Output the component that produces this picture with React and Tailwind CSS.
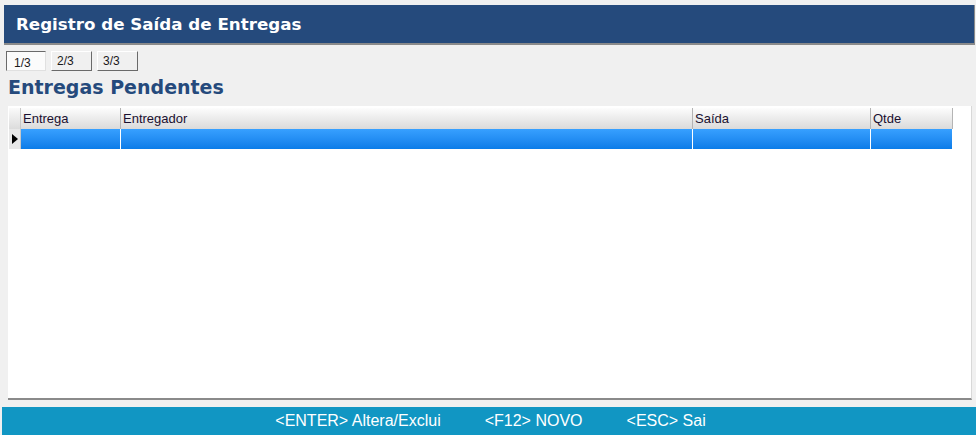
import { useState } from "react";

const COLUMNS = [
  { key: "entrega", label: "Entrega", width: "w-[100px]" },
  { key: "entregador", label: "Entregador", width: "w-[572px]" },
  { key: "saida", label: "Saída", width: "w-[178px]" },
  { key: "qtde", label: "Qtde", width: "w-[82px]" },
];

const TABS = ["1/3", "2/3", "3/3"];

export default function App() {
  const [tab, setTab] = useState(0);

  return (
    <div className="w-[976px] h-[435px] bg-[#f0f0f0] flex flex-col font-['Liberation_Sans',sans-serif] overflow-hidden">
      <div className="mt-[5px] ml-[4px] mr-px h-[40px] bg-[#254a7c] border-b-2 border-r border-[#8a8a8a] flex items-center pl-[12px] shrink-0">
        <h1 className="text-white font-bold text-[16.7px] font-['DejaVu_Sans',sans-serif] pt-[1px]">
          Registro de Saída de Entregas
        </h1>
      </div>

      <div className="flex gap-[5px] ml-[6px] mt-[6px]">
        {TABS.map((t, i) => (
          <button
            key={t}
            type="button"
            onClick={() => setTab(i)}
            className={
              i === tab
                ? "w-[40px] h-[20px] text-left pl-[7px] pt-[2px] text-[12px] text-[#1a1a1a] bg-[#fbfbfb] border border-t-[#6a6a6a] border-l-[#6a6a6a] border-r-[#e0e0e0] border-b-[#e0e0e0]"
                : "w-[41px] h-[20px] text-left pl-[5px] text-[12px] text-[#1a1a1a] bg-[#f0f0f0] border border-t-white border-l-white border-r-[#6a6a6a] border-b-[#6a6a6a]"
            }
          >
            {t}
          </button>
        ))}
      </div>

      <h2 className="ml-[8px] mt-[5px] text-[19px] leading-[22px] font-bold text-[#254a7c] font-['DejaVu_Sans',sans-serif]">
        Entregas Pendentes
      </h2>

      <div className="ml-[8px] mr-[4px] mt-[8px] h-[295px] bg-white border-r border-b-2 border-r-[#d8d8d8] border-b-[#8a8a8a] pt-[2px] pl-px">
        <div className="flex h-[21px]">
          <div className="w-[12px] bg-gradient-to-b from-[#fafafa] to-[#dcdcdc] border-r border-[#c8c8c8]" />
          {COLUMNS.map((c) => (
            <div
              key={c.key}
              className={`${c.width} bg-gradient-to-b from-[#fdfdfd] to-[#dadada] border-r border-[#b4b4b4] text-[13px] leading-[21px] pl-[2px] text-[#1a1030]`}
            >
              {c.label}
            </div>
          ))}
        </div>
        <div className="flex h-[20px]">
          <div className="w-[12px] bg-[#e8e8e8] border-r border-[#c8c8c8] flex items-center justify-center">
            <svg width="6" height="10" viewBox="0 0 6 10">
              <path d="M0 0 L6 5 L0 10 Z" fill="#000" />
            </svg>
          </div>
          {COLUMNS.map((c) => (
            <div
              key={c.key}
              className={`${c.width} bg-gradient-to-b from-[#37a0ff] to-[#0a7ce8] border-r border-white`}
            />
          ))}
        </div>
      </div>

      <div className="mt-[7px] ml-[2px] h-[28px] bg-[#1196c3] flex items-center justify-center gap-[44px] text-white text-[16px] pl-[3px]">
        <span>&lt;ENTER&gt; Altera/Exclui</span>
        <span>&lt;F12&gt; NOVO</span>
        <span>&lt;ESC&gt; Sai</span>
      </div>
    </div>
  );
}
